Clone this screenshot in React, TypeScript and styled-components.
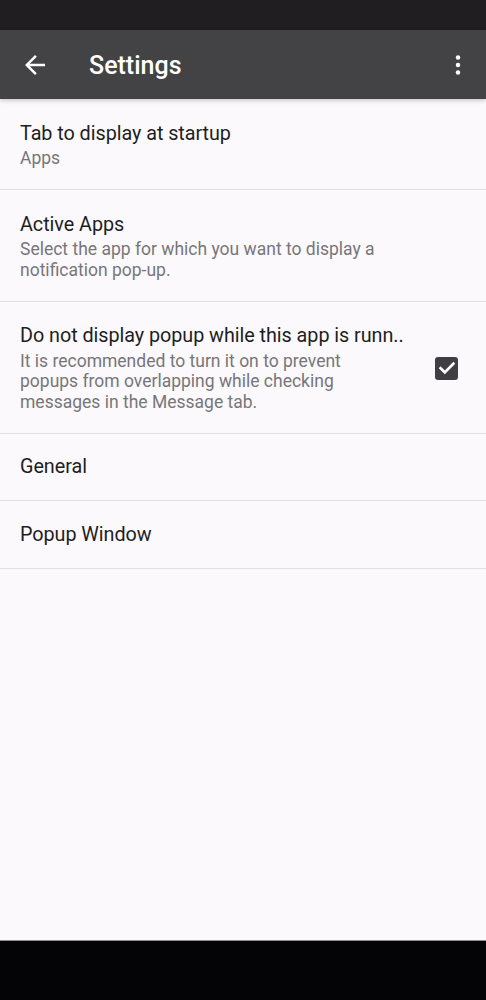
import React from "react";
import styled, { createGlobalStyle } from "styled-components";

const GlobalStyle = createGlobalStyle`
  html, body {
    margin: 0;
    padding: 0;
    background: #fbf9fc;
  }
  body {
    font-family: Roboto, "Noto Sans", "Liberation Sans", sans-serif;
    -webkit-font-smoothing: antialiased;
  }
`;

interface IPref {
  title: string;
  summary?: string;
  checked?: boolean;
}

const prefs: IPref[] = [
  { title: "Tab to display at startup", summary: "Apps" },
  {
    title: "Active Apps",
    summary: "Select the app for which you want to display a notification pop-up.",
  },
  {
    title: "Do not display popup while this app is runn..",
    summary:
      "It is recommended to turn it on to prevent popups from overlapping while checking messages in the Message tab.",
    checked: true,
  },
  { title: "General" },
  { title: "Popup Window" },
];

const BackIcon = () => (
  <svg width="30" height="30" viewBox="0 0 24 24" fill="none">
    <path
      d="M20 11H7.83l5.59-5.59L12 4l-8 8 8 8 1.41-1.41L7.83 13H20v-2z"
      fill="#ffffff"
    />
  </svg>
);

const MoreIcon = () => (
  <svg width="30" height="30" viewBox="0 0 24 24">
    <circle cx="12" cy="6" r="1.8" fill="#ffffff" />
    <circle cx="12" cy="12" r="1.8" fill="#ffffff" />
    <circle cx="12" cy="18" r="1.8" fill="#ffffff" />
  </svg>
);

const PrefRow: React.FC<IPref> = ({ title, summary, checked }) => (
  <Row $single={!summary}>
    <TextCol>
      <Title>{title}</Title>
      {summary && <Summary $narrow={checked !== undefined}>{summary}</Summary>}
    </TextCol>
    {checked !== undefined && (
      <Widget>
        <CheckBox $checked={checked}>
          {checked && (
            <svg width="20" height="20" viewBox="0 0 20 20" fill="none">
              <path
                d="M3.6 10.2l4.2 4.1 8.6-8.6"
                stroke="#ffffff"
                strokeWidth="2.6"
                strokeLinecap="square"
              />
            </svg>
          )}
        </CheckBox>
      </Widget>
    )}
  </Row>
);

export default function App() {
  return (
    <Screen>
      <GlobalStyle />
      <StatusBar />
      <Toolbar>
        <IconButton>
          <BackIcon />
        </IconButton>
        <ToolbarTitle>Settings</ToolbarTitle>
        <OverflowButton>
          <MoreIcon />
        </OverflowButton>
      </Toolbar>
      <List>
        {prefs.map((p, i) => (
          <PrefRow key={i} {...p} />
        ))}
      </List>
      <NavBar />
    </Screen>
  );
}

const Screen = styled.div`
  width: 486px;
  height: 1000px;
  display: flex;
  flex-direction: column;
  background: #fbf9fc;
  overflow: hidden;
`;

const StatusBar = styled.div`
  height: 30px;
  flex-shrink: 0;
  background: #201e21;
`;

const Toolbar = styled.div`
  height: 69px;
  flex-shrink: 0;
  display: flex;
  align-items: center;
  background: #434245;
  box-shadow: 0 2px 4px rgba(0, 0, 0, 0.18);
  position: relative;
  z-index: 1;
`;

const IconButton = styled.div`
  width: 30px;
  height: 30px;
  margin-left: 20px;
  display: flex;
`;

const ToolbarTitle = styled.div`
  margin-left: 39px;
  padding-top: 2px;
  flex: 1;
  color: #ffffff;
  font-size: 25px;
  font-weight: 500;
`;

const OverflowButton = styled.div`
  width: 30px;
  height: 30px;
  margin-right: 13px;
  display: flex;
`;

const List = styled.div`
  flex: 1;
  display: flex;
  flex-direction: column;
`;

const Row = styled.div<{ $single: boolean }>`
  display: flex;
  align-items: center;
  padding: ${(p) => (p.$single ? "21.5px 20px 21px 20px" : "22.5px 20px 20.5px 20px")};
  border-bottom: 1px solid #e2e0e3;
`;

const TextCol = styled.div`
  flex: 1;
  min-width: 0;
`;

const Title = styled.div`
  font-size: 19.8px;
  line-height: 24px;
  color: #1e1e1f;
  white-space: nowrap;
  letter-spacing: -0.05px;
`;

const Summary = styled.div<{ $narrow: boolean }>`
  margin-top: 2.5px;
  font-size: 17.5px;
  line-height: 20.5px;
  color: #777679;
  max-width: ${(p) => (p.$narrow ? "360px" : "none")};
`;

const Widget = styled.div`
  width: 58px;
  display: flex;
  justify-content: flex-end;
  padding-right: 8px;
`;

const CheckBox = styled.div<{ $checked: boolean }>`
  width: 23px;
  height: 23px;
  border-radius: 3px;
  box-sizing: border-box;
  display: flex;
  align-items: center;
  justify-content: center;
  background: ${(p) => (p.$checked ? "#3f3e42" : "transparent")};
  border: ${(p) => (p.$checked ? "none" : "2px solid #757575")};
`;

const NavBar = styled.div`
  height: 60px;
  flex-shrink: 0;
  background: #040306;
  border-top: 1px solid #8e8c90;
  box-sizing: border-box;
`;
